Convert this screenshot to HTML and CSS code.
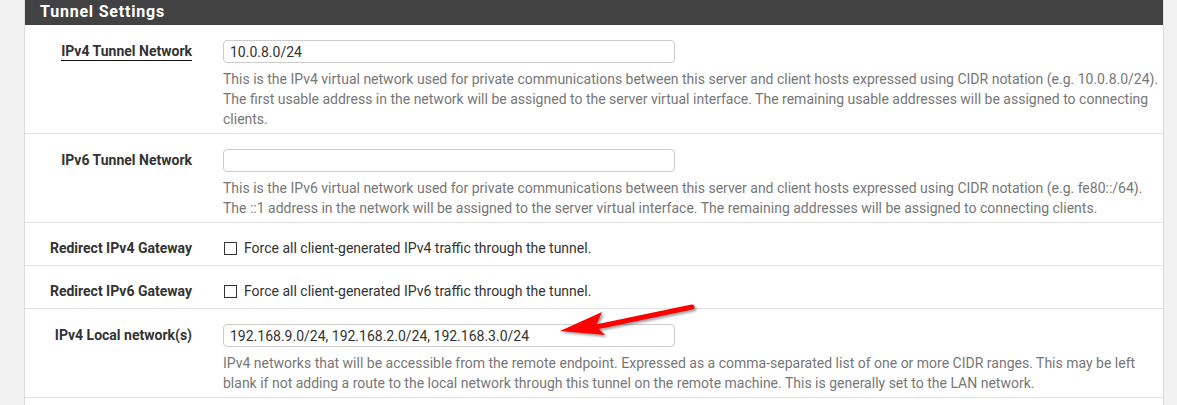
FILE: index.html
```html
<!DOCTYPE html>
<html lang="en">
<head>
    <meta charset="UTF-8">
    <title>Tunnel Settings</title>
    <link rel="stylesheet" href="styles.css">
</head>
<body>
    <div class="panel">
        <div class="panel-heading">Tunnel Settings</div>

        <div class="form-row">
            <div class="form-label"><span class="tip">IPv4 Tunnel Network</span></div>
            <div class="form-value">
                <input type="text" class="form-input" value="10.0.8.0/24">
                <div class="help">This is the IPv4 virtual network used for private communications between this server and client hosts expressed using CIDR notation (e.g. 10.0.8.0/24). The first usable address in the network will be assigned to the server virtual interface. The remaining usable addresses will be assigned to connecting clients.</div>
            </div>
        </div>

        <div class="form-row">
            <div class="form-label">IPv6 Tunnel Network</div>
            <div class="form-value">
                <input type="text" class="form-input" value="">
                <div class="help">This is the IPv6 virtual network used for private communications between this server and client hosts expressed using CIDR notation (e.g. fe80::/64). The ::1 address in the network will be assigned to the server virtual interface. The remaining addresses will be assigned to connecting clients.</div>
            </div>
        </div>

        <div class="form-row check-row">
            <div class="form-label">Redirect IPv4 Gateway</div>
            <div class="form-value">
                <label class="check"><span class="box"></span>Force all client-generated IPv4 traffic through the tunnel.</label>
            </div>
        </div>

        <div class="form-row check-row">
            <div class="form-label">Redirect IPv6 Gateway</div>
            <div class="form-value">
                <label class="check"><span class="box"></span>Force all client-generated IPv6 traffic through the tunnel.</label>
            </div>
        </div>

        <div class="form-row">
            <div class="form-label">IPv4 Local network(s)</div>
            <div class="form-value">
                <input type="text" class="form-input" value="192.168.9.0/24, 192.168.2.0/24, 192.168.3.0/24">
                <div class="help">IPv4 networks that will be accessible from the remote endpoint. Expressed as a comma-separated list of one or more CIDR ranges. This may be left blank if not adding a route to the local network through this tunnel on the remote machine. This is generally set to the LAN network.</div>
            </div>
        </div>

        <div class="form-row last-row"></div>

        <!-- annotation arrow pointing at the local networks field -->
        <svg class="arrow" width="150" height="45" viewBox="0 0 150 45">
            <line x1="46" y1="27" x2="142" y2="7" stroke="#f00" stroke-width="5" stroke-linecap="round"/>
            <path d="M10 31 L52 12 L46 26 L55 35 Z" fill="#f00"/>
        </svg>
    </div>
</body>
</html>
```

FILE: styles.css
```css
body {
    margin: 0;
    background-color: #f2f2f2;
    font-family: Roboto, "Liberation Sans", sans-serif;
    font-size: 14px;
    color: #333;
}
.panel {
    position: relative;
    margin-left: 24px;
    width: 1138px;
    background-color: white;
    border-left: 1px solid #ddd;
    border-right: 1px solid #ddd;
    height: 405px;
    overflow: hidden;
}
.panel-heading {
    background-color: #424242;
    color: white;
    font-weight: bold;
    font-size: 16px;
    letter-spacing: 0.8px;
    height: 25px;
    line-height: 24px;
    padding-left: 15px;
}
.form-row {
    display: grid;
    grid-template-columns: 182px 1fr;
    padding: 15px 0 4px;
    border-bottom: 1px solid #e2e2e2;
}
.check-row {
    padding-bottom: 7px;
}
.check-row .form-label {
    line-height: 20px;
}
.last-row {
    border-bottom: none;
}
.form-label {
    text-align: right;
    padding-right: 15px;
    font-weight: bold;
    line-height: 23px;
    color: #333;
}
.tip {
    border-bottom: 1px solid #111;
    padding-bottom: 1px;
}
.form-value {
    padding-left: 16px;
    padding-right: 4px;
}
.form-input {
    display: block;
    box-sizing: border-box;
    width: 452px;
    height: 23px;
    margin: 0;
    padding: 0 6px;
    border: 1px solid #ccc;
    border-radius: 4px;
    font-family: inherit;
    font-size: 14px;
    color: #333;
}
.help {
    margin-top: 6px;
    line-height: 20px;
    color: #777;
}
.check {
    display: flex;
    align-items: center;
    line-height: 20px;
    color: #333;
}
.box {
    width: 11px;
    height: 11px;
    border: 1px solid #333;
    margin: 0 7px 0 1px;
}
.arrow {
    position: absolute;
    left: 525px;
    top: 300px;
    filter: drop-shadow(2px 2px 1px rgba(0, 0, 0, 0.35));
}
```
